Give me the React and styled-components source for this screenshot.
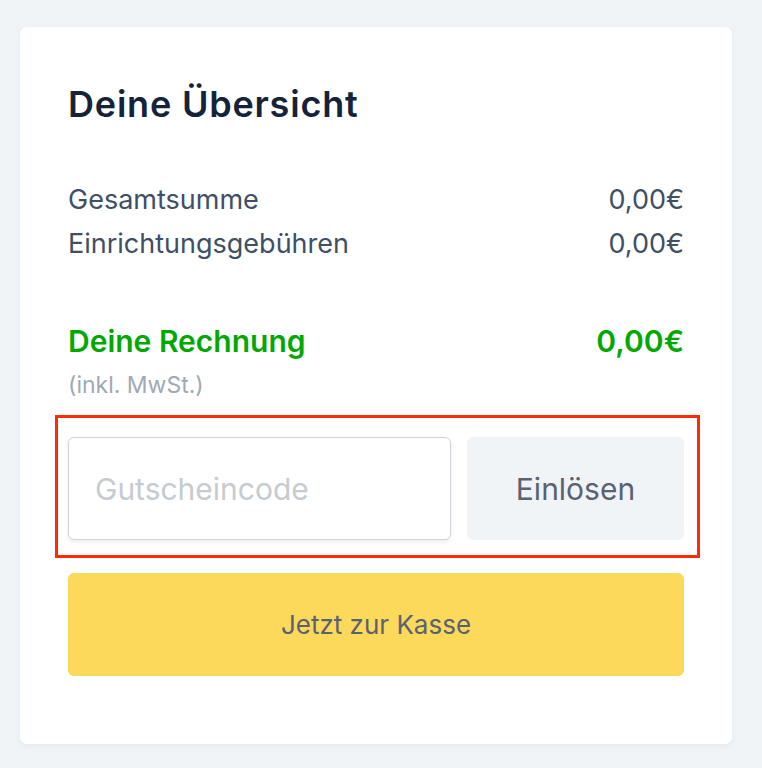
import styled, { createGlobalStyle } from 'styled-components';

const GlobalStyle = createGlobalStyle`
  html, body {
    margin: 0;
    padding: 0;
    background: #f1f4f7;
    font-family: "Inter", "Open Sans", sans-serif;
  }
`;

const Page = styled.div`
  padding: 27px 30px 24px 20px;
  min-height: 768px;
  box-sizing: border-box;
`;

const Card = styled.div`
  background: #ffffff;
  border-radius: 7px;
  box-shadow: 0 2px 6px rgba(30, 50, 80, 0.06);
  padding: 57px 48px 68px 48px;
`;

const Title = styled.h2`
  margin: 0;
  font-size: 36px;
  line-height: 40px;
  font-weight: 600;
  letter-spacing: 0.8px;
  color: #15233a;
`;

const Rows = styled.div`
  margin-top: 53px;
`;

const Row = styled.div`
  display: flex;
  justify-content: space-between;
  align-items: center;
  height: 44px;
  font-size: ${p => p.$size || 27}px;
  font-weight: ${p => (p.$bold ? 600 : 400)};
  color: ${p => p.$color || '#3e4f66'};
`;

const Total = styled.div`
  margin-top: 54px;
`;

const Note = styled.div`
  margin-top: 8px;
  font-size: 23px;
  line-height: 28px;
  color: #a0a9b4;
`;

const Highlight = styled.div`
  margin: 16px -16px 0 -13px;
  border: 3px solid #ff2a06;
  padding: 19px 13px 15px 10px;
  display: grid;
  grid-template-columns: 383px 1fr;
  gap: 16px;
`;

const CodeInput = styled.input`
  width: 100%;
  height: 103px;
  box-sizing: border-box;
  border: 1px solid #cfd4da;
  border-radius: 6px;
  box-shadow: 0 2px 4px rgba(20, 30, 50, 0.08);
  padding: 0 26px;
  font-family: inherit;
  font-size: 30px;
  color: #3e4f66;
  outline: none;

  &::placeholder {
    color: #c6cbd2;
  }
`;

const Button = styled.button`
  height: 103px;
  border: none;
  border-radius: 6px;
  background: ${p => p.$bg || '#f1f4f7'};
  color: #5a6272;
  font-family: inherit;
  font-size: ${p => p.$size || 30}px;
  cursor: pointer;
`;

const CheckoutButton = styled(Button)`
  display: block;
  width: 100%;
  margin-top: 15px;
`;

export default function App() {
  return (
    <Page>
      <GlobalStyle />
      <Card>
        <Title>Deine Übersicht</Title>

        <Rows>
          <Row>
            <span>Gesamtsumme</span>
            <span>0,00€</span>
          </Row>
          <Row>
            <span>Einrichtungsgebühren</span>
            <span>0,00€</span>
          </Row>
        </Rows>

        <Total>
          <Row $size={30} $bold $color="#02a802">
            <span>Deine Rechnung</span>
            <span>0,00€</span>
          </Row>
          <Note>(inkl. MwSt.)</Note>
        </Total>

        <Highlight>
          <CodeInput placeholder="Gutscheincode" />
          <Button>Einlösen</Button>
        </Highlight>

        <CheckoutButton $bg="#fcd95a" $size={26}>Jetzt zur Kasse</CheckoutButton>
      </Card>
    </Page>
  );
}
